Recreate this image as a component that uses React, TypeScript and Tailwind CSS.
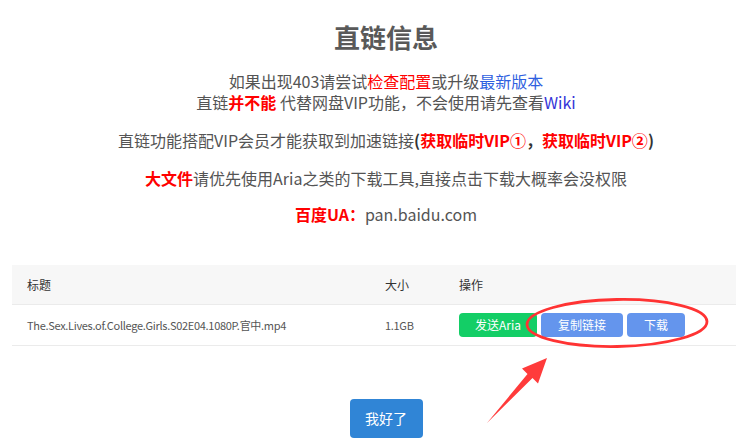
import React from 'react'

const font = { fontFamily: '"Noto Sans CJK SC", "Noto Sans", sans-serif' }

function Btn({ children, color, w }: { children: React.ReactNode; color: string; w: string }) {
  return (
    <span className={`${color} ${w} h-[24px] rounded-[4px] text-white text-[12px] leading-[24px] text-center inline-block`}>
      {children}
    </span>
  )
}

export default function App() {
  return (
    <div className="relative w-[736px] h-[442px] overflow-hidden bg-white" style={font}>
      <div className="ml-[12px] w-[748px] flex flex-col items-center text-[#545454]">
        <h2 className="mt-[18px] h-[38px] leading-[38px] text-[26px] font-bold text-[#595959]">直链信息</h2>

        <div className="mt-[15px] text-[16px] leading-[21px] text-center">
          <p>
            如果出现403请尝试<span className="text-[#ff0000]">检查配置</span>或升级
            <span className="text-[#2f5fe0]">最新版本</span>
          </p>
          <p>
            直链<b className="text-[#ff0000]">并不能</b> 代替网盘VIP功能，不会使用请先查看
            <span className="text-[#3434d8]">Wiki</span>
          </p>
        </div>

        <p className="mt-[17px] text-[16px] leading-[21px]">
          直链功能搭配VIP会员才能获取到加速链接
          <b className="text-[#333]">
            (<span className="text-[#ff0000]">获取临时VIP①</span>，<span className="text-[#ff0000]">获取临时VIP②</span>)
          </b>
        </p>

        <p className="mt-[17px] text-[16px] leading-[21px]">
          <b className="text-[#ff0000]">大文件</b>请优先使用Aria之类的下载工具,直接点击下载大概率会没权限
        </p>

        <p className="mt-[15px] text-[16px] leading-[21px]">
          <b className="text-[#ff0000]">百度UA：</b>pan.baidu.com
        </p>

        {/* file table */}
        <div className="mt-[40px] w-full">
          <div className="flex h-[40px] items-center bg-[#f7f7f7] border-b border-[#ebebeb] text-[12px] text-[#333]">
            <div className="w-[358px] pl-[15px]">标题</div>
            <div className="w-[74px] pl-[15px]">大小</div>
            <div className="pl-[15px]">操作</div>
          </div>
          <div className="flex h-[41px] items-center border-b border-[#ebebeb] text-[11px] tracking-[-0.3px] text-[#555]">
            <div className="w-[358px] pl-[15px]">The.Sex.Lives.of.College.Girls.S02E04.1080P.官中.mp4</div>
            <div className="w-[74px] pl-[15px]">1.1GB</div>
            <div className="pl-[15px] flex gap-[4px] tracking-normal">
              <Btn color="bg-[#13ce66]" w="w-[78px]">发送Aria</Btn>
              <Btn color="bg-[#6495ed]" w="w-[82px]">复制链接</Btn>
              <Btn color="bg-[#6495ed]" w="w-[58px]">下载</Btn>
            </div>
          </div>
        </div>

        <button className="mt-[53px] w-[73px] h-[39px] rounded-[4px] bg-[#3085d6] text-white text-[14px]">我好了</button>
      </div>

      {/* annotation overlay */}
      <svg className="absolute inset-0 pointer-events-none" width="736" height="442">
        <ellipse cx="617" cy="323" rx="90" ry="23.5" fill="none" stroke="#ff3333" strokeWidth="2.8" transform="rotate(-1 617 323)" />
        <polygon points="487,423 527.5,374 522,368.5 547,358 538,383.5 532.5,378" fill="#ff3b3b" />
      </svg>
    </div>
  )
}
